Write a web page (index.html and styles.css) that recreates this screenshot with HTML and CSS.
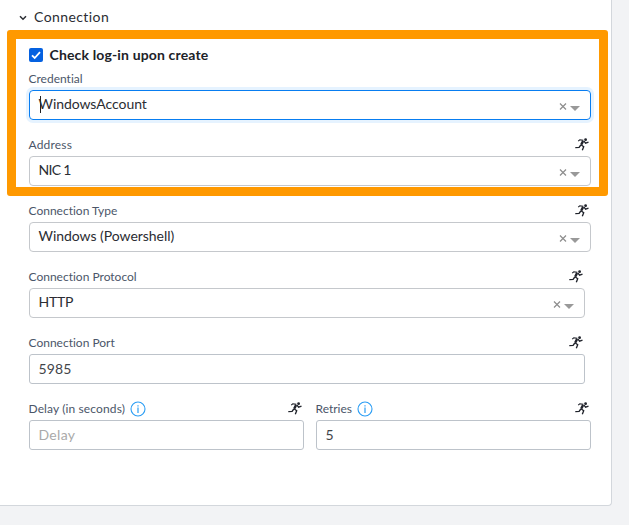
FILE: index.html
```
<!DOCTYPE html>
<html lang="en">
<head>
<meta charset="utf-8">
<title>Connection</title>
<link rel="stylesheet" href="styles.css">
</head>
<body>
<svg class="defs" aria-hidden="true">
  <symbol id="run" viewBox="0 0 14 13">
    <circle cx="10.6" cy="1.7" r="1.4" fill="currentColor"/>
    <path d="M3.2 3.2 4.8 1.8 8.4 2.4" fill="none" stroke="currentColor" stroke-width="1.1"/>
    <path d="M8.1 3 6.2 6.8" fill="none" stroke="currentColor" stroke-width="2.4"/>
    <path d="M9 3.2 10.6 5.2 13.5 4.2M5.8 7 4.1 9.4.3 9.6M6 6.8 8.7 8.7 7.3 12.3" fill="none" stroke="currentColor" stroke-width="1.35"/>
  </symbol>
  <symbol id="info" viewBox="0 0 16 16">
    <circle cx="8" cy="8" r="7" fill="none" stroke="currentColor" stroke-width="1.1"/>
    <path d="M8 6.6V12M8 4.2V5.5" stroke="currentColor" stroke-width="1.2"/>
  </symbol>
  <symbol id="tools" viewBox="0 0 22 10">
    <path d="M2 1.5 8 7.5M8 1.5 2 7.5" stroke="#8d8d8d" stroke-width="1.2"/>
    <path d="M12 4H22L17 9Z" fill="#999"/>
  </symbol>
</svg>
<main class="panel">
  <header class="heading">
    <svg class="chevron" viewBox="0 0 8 6"><path d="M1 1.2 4 4.2 7 1.2" fill="none" stroke="currentColor" stroke-width="1.5"/></svg>
    <h1 class="title">Connection</h1>
  </header>
  <form class="form">
    <div class="check">
      <span class="box"><svg viewBox="0 0 14 14"><path d="M3 7.3 5.7 10 11 4.2" fill="none" stroke="#fff" stroke-width="1.8"/></svg></span>
      <span class="check-text">Check log-in upon create</span>
    </div>
    <div class="field">
      <div class="label"><span class="text">Credential</span></div>
      <div class="control focused"><span class="caret"></span><span class="value account">WindowsAccount</span><svg class="tools"><use href="#tools"/></svg></div>
    </div>
    <div class="field">
      <div class="label"><span class="text address">Address</span><svg class="run"><use href="#run"/></svg></div>
      <div class="control"><span class="value nic">NIC 1</span><svg class="tools"><use href="#tools"/></svg></div>
    </div>
    <div class="field">
      <div class="label"><span class="text">Connection Type</span><svg class="run"><use href="#run"/></svg></div>
      <div class="control"><span class="value">Windows (Powershell)</span><svg class="tools"><use href="#tools"/></svg></div>
    </div>
    <div class="field inset">
      <div class="label"><span class="text">Connection Protocol</span><svg class="run"><use href="#run"/></svg></div>
      <div class="control"><span class="value http">HTTP</span><svg class="tools"><use href="#tools"/></svg></div>
    </div>
    <div class="field inset">
      <div class="label"><span class="text">Connection Port</span><svg class="run"><use href="#run"/></svg></div>
      <div class="control plain"><span class="value digits">5985</span></div>
    </div>
    <div class="pair">
      <div class="field">
        <div class="label"><span class="text delay">Delay (in seconds)</span><svg class="info"><use href="#info"/></svg><svg class="run"><use href="#run"/></svg></div>
        <div class="control plain"><span class="value placeholder">Delay</span></div>
      </div>
      <div class="field">
        <div class="label"><span class="text">Retries</span><svg class="info"><use href="#info"/></svg><svg class="run"><use href="#run"/></svg></div>
        <div class="control plain"><span class="value digits">5</span></div>
      </div>
    </div>
  </form>
  <div class="highlight"></div>
</main>
</body>
</html>
```
FILE: styles.css
```
* { box-sizing: border-box; }
body {
  margin: 0;
  height: 525px;
  overflow: hidden;
  background: #f2f3f5;
  font-family: Lato, "Open Sans", sans-serif;
  font-variant-ligatures: none;
  color: #2b2d33;
}
.defs { position: absolute; width: 0; height: 0; }
.panel {
  position: relative;
  width: 612px;
  height: 506px;
  background: #fff;
  border: solid #d3d7dc;
  border-width: 0 1px 1px 0;
  border-radius: 0 0 4px 0;
}
.heading {
  display: flex;
  align-items: center;
  height: 34px;
  padding-left: 19px;
}
.chevron { width: 8px; height: 6px; margin-top: 2px; }
.title { margin: 0 0 2px 7px; font-size: 14px; font-weight: 400; letter-spacing: .42px; }
.form { padding: 10px 20px 0 29px; }
.check { display: flex; align-items: center; height: 22px; margin-bottom: 2px; }
.box { display: flex; width: 14px; height: 14px; border-radius: 2px; background: #0561e0; }
.check-text { margin: 0 0 2px 6.5px; font-size: 14px; font-weight: 700; letter-spacing: .15px; color: #202228; }
.field { margin-bottom: 14px; }
.inset { margin-right: 6px; }
.label {
  display: flex;
  align-items: center;
  height: 22px;
  font-size: 12px;
  color: #4b5669;
  white-space: nowrap;
}
.text { margin: 0 0 2px -.5px; }
.address { letter-spacing: .18px; }
.delay { letter-spacing: .12px; }
.run { width: 14px; height: 13px; margin: 0 2px 2px auto; color: #20232b; }
.info { width: 16px; height: 16px; margin: 0 0 1px 5px; color: #2a9df4; }
.pair { display: grid; grid-template-columns: 275px 275px; gap: 12px; }
.control {
  display: flex;
  align-items: center;
  height: 30px;
  padding: 0 10px 2px 9px;
  border: 1px solid #c5c8cc;
  border-radius: 4px;
  font-size: 14px;
}
.plain { padding-bottom: 0; border-color: #bdc3ca; border-radius: 3px; color: #42454a; }
.value { margin: 0 0 1px -.5px; letter-spacing: -.04px; }
.account { letter-spacing: -.06px; }
.nic { letter-spacing: -.7px; }
.http { letter-spacing: -.25px; }
.digits { letter-spacing: .15px; }
.focused { border-color: #087df1; box-shadow: 0 0 0 3px #e6f3ff; }
.caret { width: 1px; height: 17px; margin: 0 -2px 0 1px; background: #222; }
.tools { width: 22px; height: 10px; margin: 5px 0 0 auto; }
.placeholder { color: #aaa; letter-spacing: .3px; }
.highlight {
  position: absolute;
  top: 30px;
  left: 7px;
  width: 601px;
  height: 166px;
  border: 9px solid #ff9900;
  border-radius: 3px;
  pointer-events: none;
}
```
